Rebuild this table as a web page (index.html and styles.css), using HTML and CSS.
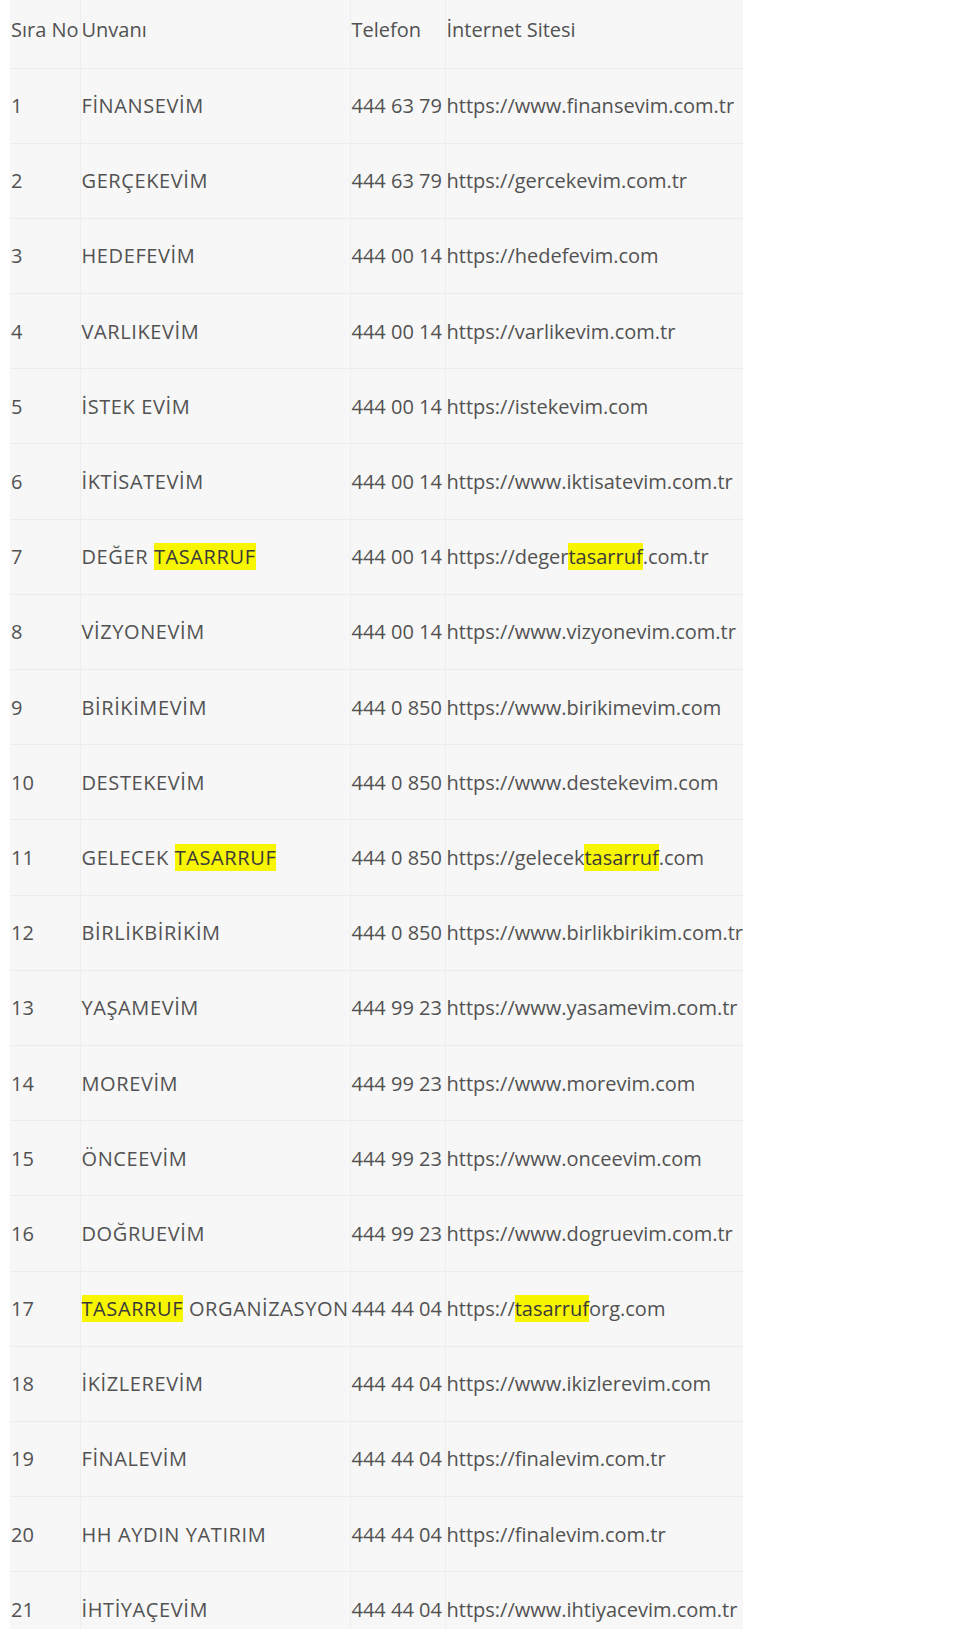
FILE: index.html
```html
<!DOCTYPE html>
<html lang="tr">
<head>
<meta charset="utf-8">
<link rel="stylesheet" href="styles.css">
</head>
<body>
<table class="list">
  <colgroup>
    <col class="c-no"><col class="c-name"><col class="c-tel"><col class="c-web">
  </colgroup>
  <thead>
    <tr class="head"><th>Sıra No</th><th>Unvanı</th><th>Telefon</th><th>İnternet Sitesi</th></tr>
  </thead>
  <tbody>
    <tr><td>1</td><td class="name">FİNANSEVİM</td><td>444 63 79</td><td>https://www.finansevim.com.tr</td></tr>
    <tr><td>2</td><td class="name">GERÇEKEVİM</td><td>444 63 79</td><td>https://gercekevim.com.tr</td></tr>
    <tr><td>3</td><td class="name">HEDEFEVİM</td><td>444 00 14</td><td>https://hedefevim.com</td></tr>
    <tr><td>4</td><td class="name">VARLIKEVİM</td><td>444 00 14</td><td>https://varlikevim.com.tr</td></tr>
    <tr><td>5</td><td class="name">İSTEK EVİM</td><td>444 00 14</td><td>https://istekevim.com</td></tr>
    <tr><td>6</td><td class="name">İKTİSATEVİM</td><td>444 00 14</td><td>https://www.iktisatevim.com.tr</td></tr>
    <tr><td>7</td><td class="name">DEĞER <mark>TASARRUF</mark></td><td>444 00 14</td><td>https://deger<mark>tasarruf</mark>.com.tr</td></tr>
    <tr><td>8</td><td class="name">VİZYONEVİM</td><td>444 00 14</td><td>https://www.vizyonevim.com.tr</td></tr>
    <tr><td>9</td><td class="name">BİRİKİMEVİM</td><td>444 0 850</td><td>https://www.birikimevim.com</td></tr>
    <tr><td>10</td><td class="name">DESTEKEVİM</td><td>444 0 850</td><td>https://www.destekevim.com</td></tr>
    <tr><td>11</td><td class="name">GELECEK <mark>TASARRUF</mark></td><td>444 0 850</td><td>https://gelecek<mark>tasarruf</mark>.com</td></tr>
    <tr><td>12</td><td class="name">BİRLİKBİRİKİM</td><td>444 0 850</td><td>https://www.birlikbirikim.com.tr</td></tr>
    <tr><td>13</td><td class="name">YAŞAMEVİM</td><td>444 99 23</td><td>https://www.yasamevim.com.tr</td></tr>
    <tr><td>14</td><td class="name">MOREVİM</td><td>444 99 23</td><td>https://www.morevim.com</td></tr>
    <tr><td>15</td><td class="name">ÖNCEEVİM</td><td>444 99 23</td><td>https://www.onceevim.com</td></tr>
    <tr><td>16</td><td class="name">DOĞRUEVİM</td><td>444 99 23</td><td>https://www.dogruevim.com.tr</td></tr>
    <tr><td>17</td><td class="name"><mark>TASARRUF</mark> ORGANİZASYON</td><td>444 44 04</td><td>https://<mark>tasarruf</mark>org.com</td></tr>
    <tr><td>18</td><td class="name">İKİZLEREVİM</td><td>444 44 04</td><td>https://www.ikizlerevim.com</td></tr>
    <tr><td>19</td><td class="name">FİNALEVİM</td><td>444 44 04</td><td>https://finalevim.com.tr</td></tr>
    <tr><td>20</td><td class="name">HH AYDIN YATIRIM</td><td>444 44 04</td><td>https://finalevim.com.tr</td></tr>
    <tr><td>21</td><td class="name">İHTİYAÇEVİM</td><td>444 44 04</td><td>https://www.ihtiyacevim.com.tr</td></tr>
  </tbody>
</table>
</body>
</html>
```

FILE: styles.css
```css
html, body {
  margin: 0;
  padding: 0;
  background: #ffffff;
}
body {
  padding-left: 10px;
  overflow: hidden;
  height: 1629px;
}
.list {
  border-collapse: collapse;
  table-layout: fixed;
  width: 733px;
  background: #f7f7f7;
  font-family: "Open Sans", "Noto Sans", sans-serif;
  font-size: 20px;
  color: #525252;
}
.c-no { width: 70px; }
.c-name { width: 270px; }
.c-tel { width: 95px; }
.c-web { width: 298px; }
.list th, .list td {
  padding: 0 0 0 1px;
  text-align: left;
  font-weight: normal;
  white-space: nowrap;
  overflow: visible;
  border-left: 1px solid #eeeeee;
  border-bottom: 1px solid #ececec;
  line-height: 27px;
}
.list th:first-child, .list td:first-child {
  border-left: none;
}
.list .head th {
  height: 68px;
  padding-bottom: 8px;
  box-sizing: border-box;
}
.list tbody td {
  height: 75.2px;
  box-sizing: border-box;
}
.list td.name {
  letter-spacing: 0.6px;
}
mark {
  background: #f8f500;
  color: #3a3a3a;
}
```
